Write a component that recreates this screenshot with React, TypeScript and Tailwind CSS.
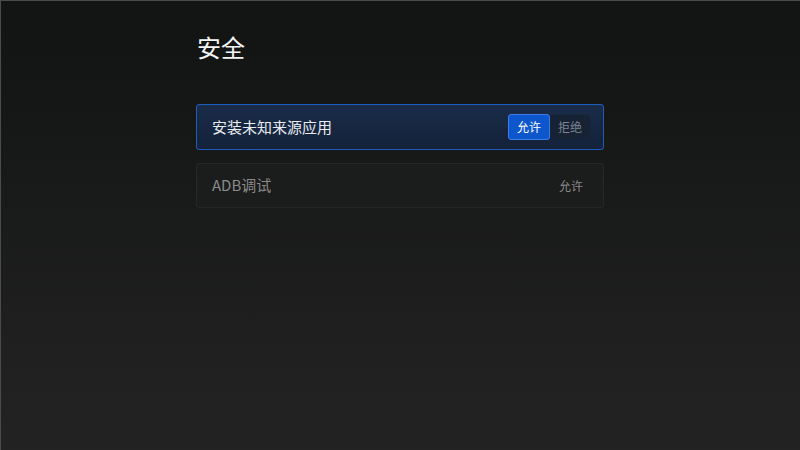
import React from "react";

const font = { fontFamily: '"Noto Sans CJK SC", "Noto Sans", sans-serif' };

export default function App() {
  return (
    <div
      className="w-[800px] h-[450px] border-t border-l border-[#4a4c4b] bg-gradient-to-b from-[#111412] to-[#232323] overflow-hidden"
      style={font}
    >
      <div className="w-[408px] ml-[195px] pt-[29px]">
        <h1 className="text-[24px] leading-[34px] text-[#f4f4f4] pl-[1px]">安全</h1>

        <div className="mt-[40px] h-[46px] flex items-center justify-between rounded-[3px] border border-[#1f5cc0] bg-gradient-to-b from-[#1a2c48] to-[#14223a] pl-[15px] pr-[13px]">
          <span className="text-[15px] text-[#e8ebf0]">安装未知来源应用</span>
          <div className="flex items-center">
            <button className="w-[42px] h-[26px] rounded-[3px] border border-[#3b7ee8] bg-[#0d56cc] text-[12px] text-white">
              允许
            </button>
            <span className="w-[40px] h-[24px] flex items-center justify-center rounded-r-[3px] bg-[#172235] text-[12px] text-[#7d8592]">
              拒绝
            </span>
          </div>
        </div>

        <div className="mt-[13px] h-[45px] flex items-center justify-between rounded-[3px] border border-[#262827] bg-[#1b1c1c] pl-[15px] pr-[20px]">
          <span className="text-[15px] text-[#8a8a8a]">ADB调试</span>
          <span className="text-[12px] text-[#8a8a8a]">允许</span>
        </div>
      </div>
    </div>
  );
}
